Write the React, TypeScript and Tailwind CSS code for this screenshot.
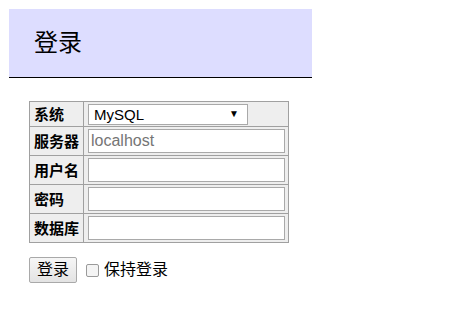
import React from 'react';

const font = "font-['Liberation_Sans','Noto_Sans_CJK_SC',sans-serif]";

const rows = [
  { label: '服务器', placeholder: 'localhost' },
  { label: '用户名', placeholder: '' },
  { label: '密码', placeholder: '' },
  { label: '数据库', placeholder: '' },
];

const App: React.FC = () => {
  return (
    <div className={`min-h-screen bg-white p-[9px] text-black ${font}`}>
      {/* Header */}
      <div className="w-[303px] h-[69px] bg-[#ddddff] border-b border-black flex items-center pl-[25px]">
        <h1 className="text-[24px] leading-none font-normal">登录</h1>
      </div>

      {/* Form */}
      <div className="pl-[20px] pt-[23px]">
        <table className="border-collapse border border-[#a0a0a0] bg-[#eeeeee]">
          <tbody>
            <tr className="h-[25px]">
              <td className="w-[54px] border border-[#a0a0a0] pl-[4px] text-[15px] font-bold leading-none">系统</td>
              <td className="w-[204px] border border-[#a0a0a0] pl-[4px] pr-[3px]">
                <div className="w-[160px] h-[21px] bg-white border border-[#a9a9a9] flex items-center justify-between pl-[5px] pr-[8px]">
                  <span className="text-[15px] leading-none">MySQL</span>
                  <span className="text-[10px] leading-none">▼</span>
                </div>
              </td>
            </tr>
            {rows.map((r) => (
              <tr key={r.label} className="h-[29px]">
                <td className="border border-[#a0a0a0] pl-[4px] text-[15px] font-bold leading-none">{r.label}</td>
                <td className="border border-[#a0a0a0] pl-[4px] pr-[3px]">
                  <input
                    type="text"
                    placeholder={r.placeholder}
                    className="block w-[197px] h-[24px] bg-white border border-[#a9a9a9] px-[2px] text-[16px] placeholder:text-[#757575] outline-none"
                  />
                </td>
              </tr>
            ))}
          </tbody>
        </table>

        <div className="flex items-center mt-[14px]">
          <button
            type="button"
            className="w-[48px] h-[26px] border border-[#a9a9a9] rounded-[2px] bg-gradient-to-b from-[#f6f6f6] to-[#e3e3e3] text-[16px] leading-none"
          >
            登录
          </button>
          <label className="flex items-center ml-[9px] text-[16px]">
            <span className="w-[13px] h-[13px] border border-[#9a9a9a] rounded-[2px] bg-[#f4f4f4]" />
            <span className="ml-[5px] leading-none">保持登录</span>
          </label>
        </div>
      </div>
    </div>
  );
};

export default App;
